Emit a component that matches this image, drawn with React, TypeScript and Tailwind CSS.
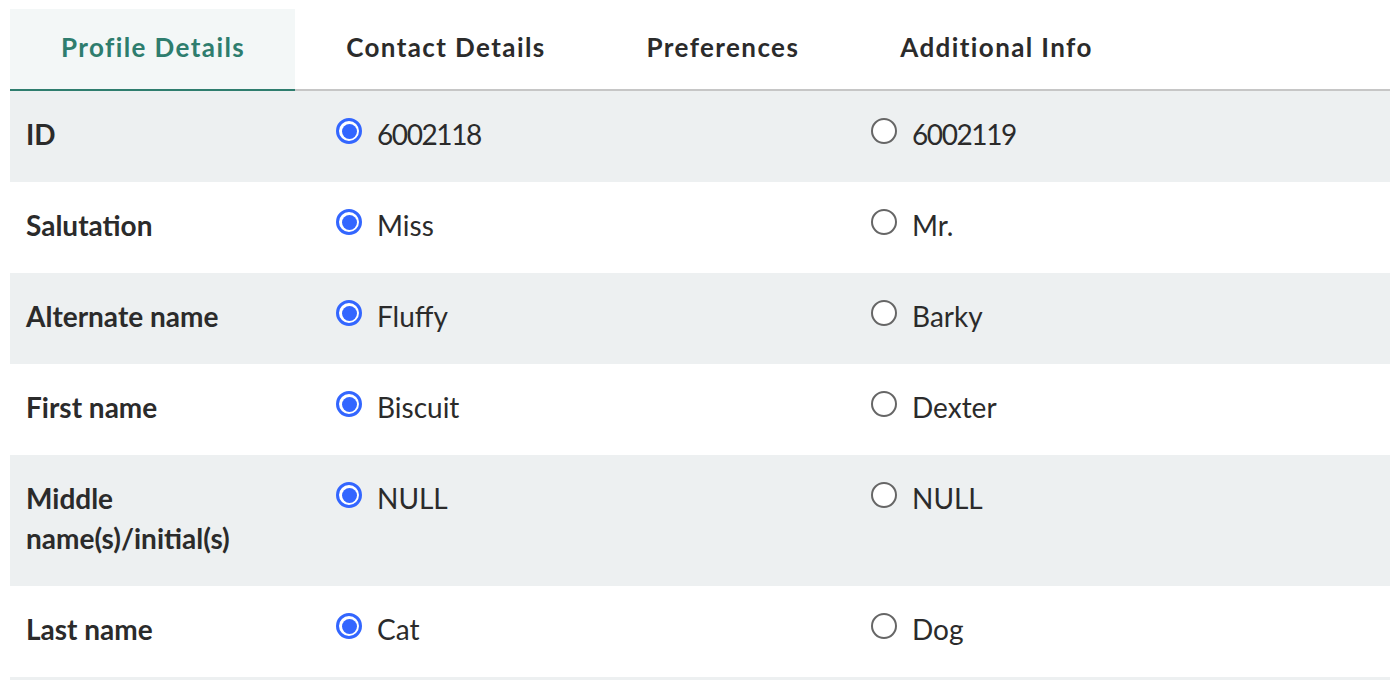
import React from "react";

const rows: [string, string, string][] = [
  ["ID", "6002118", "6002119"],
  ["Salutation", "Miss", "Mr."],
  ["Alternate name", "Fluffy", "Barky"],
  ["First name", "Biscuit", "Dexter"],
  ["Middle name(s)/initial(s)", "NULL", "NULL"],
  ["Last name", "Cat", "Dog"],
  ["", "", ""],
];

function Radio({ checked }: { checked: boolean }) {
  if (checked) {
    return (
      <span className="mt-[4px] flex h-[26px] w-[26px] shrink-0 items-center justify-center rounded-full border-[3px] border-[#3366ff] bg-white">
        <span className="h-[15px] w-[15px] rounded-full bg-[#3366ff]" />
      </span>
    );
  }
  return <span className="mt-[4px] h-[26px] w-[26px] shrink-0 rounded-full border-2 border-[#666666] bg-white" />;
}

function Value({ text }: { text: string }) {
  const isNum = /^\d+$/.test(text);
  return <span className={isNum ? "tracking-[-1.4px]" : ""}>{text}</span>;
}

export default function App() {
  const tabs = ["Profile Details", "Contact Details", "Preferences", "Additional Info"];
  return (
    <div className="min-h-[680px] bg-white px-[10px] pt-[9px] font-['Lato',sans-serif] text-[#2b2b2b]">
      <div className="flex border-b-2 border-[#c6c6c6]">
        {tabs.map((t, i) => (
          <div
            key={t}
            className={
              i === 0
                ? "-mb-[2px] flex h-[82px] items-center border-b-2 border-[#2e7d6e] bg-[#f3f7f7] pb-[3px] pl-[51px] pr-[50px] text-[26px] font-bold tracking-[1.4px] text-[#2e7d6e]"
                : "flex h-[80px] items-center pb-[3px] pl-[51px] pr-[50px] text-[26px] font-bold tracking-[1.4px] text-[#2b2b2b]"
            }
          >
            {t}
          </div>
        ))}
      </div>
      <div>
        {rows.map((r, i) => (
          <div
            key={i}
            className={
              "grid grid-cols-[310px_535px_535px] text-[28px] leading-[40px] " +
              (i % 2 === 0 ? "bg-[#edf0f1]" : "bg-white")
            }
          >
            <div className="px-[16px] pb-[28px] pt-[23px] font-bold">{r[0]}</div>
            {r[0] !== "" ? (
              <>
                <div className="flex items-start gap-[15px] px-[16px] pb-[28px] pt-[23px]">
                  <Radio checked />
                  <Value text={r[1]} />
                </div>
                <div className="flex items-start gap-[15px] px-[16px] pb-[28px] pt-[23px]">
                  <Radio checked={false} />
                  <Value text={r[2]} />
                </div>
              </>
            ) : (
              <>
                <div />
                <div />
              </>
            )}
          </div>
        ))}
      </div>
    </div>
  );
}
